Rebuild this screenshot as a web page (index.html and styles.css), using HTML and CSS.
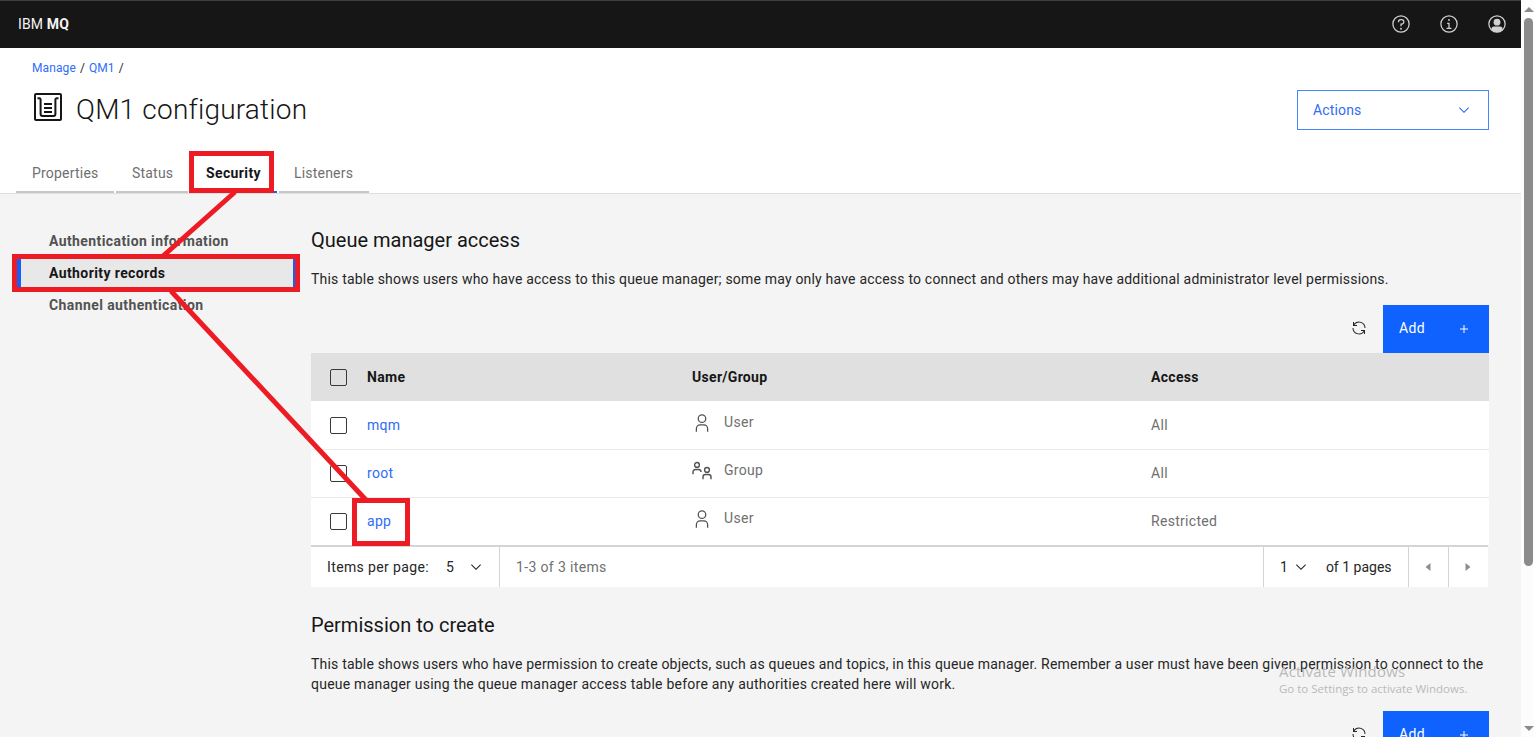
FILE: index.html
```html
<!DOCTYPE html>
<html lang="en">
<head>
  <meta charset="UTF-8">
  <meta name="viewport" content="width=device-width, initial-scale=1.0">
  <title>IBM MQ</title>
  <link rel="stylesheet" href="styles.css">
</head>
<body>
  <!-- Shared icons -->
  <svg class="icon-defs" width="0" height="0">
    <symbol id="icon-user" viewBox="0 0 32 32">
      <path d="M16,4a5,5,0,1,1-5,5,5,5,0,0,1,5-5m0-2a7,7,0,1,0,7,7A7,7,0,0,0,16,2Z"/>
      <path d="M26,30H24V25a5,5,0,0,0-5-5H13a5,5,0,0,0-5,5v5H6V25a7,7,0,0,1,7-7h6a7,7,0,0,1,7,7Z"/>
    </symbol>
    <symbol id="icon-group" viewBox="0 0 20 20">
      <g fill="none" stroke="currentColor" stroke-width="1.4">
        <circle cx="5" cy="3.9" r="2.4"/>
        <path d="M1,13.2V10.9A2.4,2.4,0,0,1,3.4,8.5H6.6A2.4,2.4,0,0,1,9,10.9"/>
        <circle cx="15" cy="8.9" r="2.4"/>
        <path d="M11,18.2V15.9A2.4,2.4,0,0,1,13.4,13.5H16.6A2.4,2.4,0,0,1,19,15.9V18.2"/>
      </g>
    </symbol>
    <symbol id="icon-renew" viewBox="0 0 32 32">
      <path d="M12,10H6.78A11,11,0,0,1,27,16h2A13,13,0,0,0,6,7.68V4H4v8h8Z"/>
      <path d="M20,22h5.22A11,11,0,0,1,5,16H3a13,13,0,0,0,23,8.32V28h2V20H20Z"/>
    </symbol>
    <symbol id="icon-chevron" viewBox="0 0 16 16">
      <path d="M8 11 3 6 3.7 5.3 8 9.6 12.3 5.3 13 6z"/>
    </symbol>
    <symbol id="icon-add" viewBox="0 0 32 32">
      <path d="M17 15 17 8 15 8 15 15 8 15 8 17 15 17 15 24 17 24 17 17 24 17 24 15z"/>
    </symbol>
  </svg>

  <div class="window">
    <div class="app">
      <header class="topbar">
        <div class="brand">IBM <b>MQ</b></div>
        <div class="topbar-icons">
          <svg viewBox="0 0 32 32">
            <path d="M16,2A14,14,0,1,0,30,16,14,14,0,0,0,16,2Zm0,26A12,12,0,1,1,28,16,12,12,0,0,1,16,28Z"/>
            <circle cx="16" cy="23.5" r="1.5"/>
            <path d="M17,8H15.5A4.49,4.49,0,0,0,11,12.5V13h2v-.5A2.5,2.5,0,0,1,15.5,10H17a2.5,2.5,0,0,1,0,5H15v4.5h2V17a4.5,4.5,0,0,0,0-9Z"/>
          </svg>
          <svg viewBox="0 0 32 32">
            <path d="M17 22 17 14 13 14 13 16 15 16 15 22 12 22 12 24 20 24 20 22 17 22z"/>
            <path d="M16,8a1.5,1.5,0,1,0,1.5,1.5A1.5,1.5,0,0,0,16,8Z"/>
            <path d="M16,30A14,14,0,1,1,30,16,14,14,0,0,1,16,30ZM16,4A12,12,0,1,0,28,16,12,12,0,0,0,16,4Z"/>
          </svg>
          <svg viewBox="0 0 32 32">
            <circle cx="16" cy="16" r="13" fill="none" stroke="currentColor" stroke-width="2"/>
            <circle cx="16" cy="13" r="5.5"/>
            <path d="M7,25.5V24a4,4,0,0,1,4-4H21a4,4,0,0,1,4,4v1.5A13,13,0,0,1,7,25.5Z"/>
          </svg>
        </div>
      </header>

      <section class="page-header">
        <nav class="breadcrumb">
          <a>Manage</a><span>/</span><a>QM1</a><span>/</span>
        </nav>
        <div class="title-row">
          <svg class="title-icon" viewBox="0 0 32 32">
            <g fill="none" stroke="currentColor" stroke-width="2">
              <rect x="3" y="3" width="26" height="26" rx="1"/>
              <path d="M5.5,7.2H7.2A1.4,1.4,0,0,1,8.6,8.6V23A2,2,0,0,0,10.6,25H21.4A2,2,0,0,0,23.4,23V8.6A1.4,1.4,0,0,1,24.8,7.2H26.5"/>
              <path d="M12,13H20M12,17H20M12,21H20"/>
            </g>
          </svg>
          <h1>QM1 configuration</h1>
          <button class="actions">Actions <svg><use href="#icon-chevron"/></svg></button>
        </div>
        <div class="tabs">
          <div class="tab tab-properties">Properties</div>
          <div class="tab tab-status">Status</div>
          <div class="tab tab-security selected">Security</div>
          <div class="tab tab-listeners">Listeners</div>
        </div>
      </section>

      <div class="main">
        <aside class="sidenav">
          <div class="sidenav-item">Authentication information</div>
          <div class="sidenav-item selected">Authority records</div>
          <div class="sidenav-item">Channel authentication</div>
        </aside>

        <main class="content">
          <h2>Queue manager access</h2>
          <p>This table shows users who have access to this queue manager; some may only have access to connect and others may have additional administrator level permissions.</p>
          <div class="toolbar">
            <svg class="renew"><use href="#icon-renew"/></svg>
            <button class="add">Add <svg><use href="#icon-add"/></svg></button>
          </div>
          <div class="table">
            <div class="row head">
              <i class="checkbox"></i><span>Name</span><span>User/Group</span><span>Access</span>
            </div>
            <div class="row">
              <i class="checkbox"></i><a>mqm</a><span class="kind"><svg><use href="#icon-user"/></svg>User</span><span>All</span>
            </div>
            <div class="row">
              <i class="checkbox"></i><a>root</a><span class="kind"><svg><use href="#icon-group"/></svg>Group</span><span>All</span>
            </div>
            <div class="row">
              <i class="checkbox"></i><a>app</a><span class="kind"><svg><use href="#icon-user"/></svg>User</span><span>Restricted</span>
            </div>
          </div>
          <div class="pagination">
            <div class="per-page"><span class="per-page-label">Items per page:</span><span class="per-page-value">5</span><svg><use href="#icon-chevron"/></svg></div>
            <div class="range">1-3 of 3 items</div>
            <div class="page-select"><span>1</span><svg><use href="#icon-chevron"/></svg><span>of 1 pages</span></div>
            <div class="page-btn"><svg viewBox="0 0 16 16"><path d="M10.5 4 5.5 8 10.5 12z"/></svg></div>
            <div class="page-btn"><svg viewBox="0 0 16 16"><path d="M5.5 4 10.5 8 5.5 12z"/></svg></div>
          </div>

          <h2 class="create-title">Permission to create</h2>
          <p>This table shows users who have permission to create objects, such as queues and topics, in this queue manager. Remember a user must have been given permission to connect to the<br><span class="create-rest">queue manager using the queue manager access table before any authorities created here will work.</span></p>
          <div class="toolbar create-toolbar">
            <svg class="renew"><use href="#icon-renew"/></svg>
            <button class="add">Add <svg><use href="#icon-add"/></svg></button>
          </div>
        </main>
      </div>
    </div>

    <div class="scrollbar">
      <i class="arrow-up"></i>
      <i class="thumb"></i>
      <i class="arrow-down"></i>
    </div>
  </div>

  <!-- Path through Security > Authority records > app -->
  <svg class="annotations" viewBox="0 0 1534 737">
    <rect x="191.5" y="153.5" width="80" height="37"/>
    <rect x="14.5" y="256.5" width="283" height="33"/>
    <rect x="354.5" y="500.5" width="53" height="43"/>
    <path d="M235,192 163,256"/>
    <path d="M171,291 366,500"/>
  </svg>

  <div class="watermark">
    <div class="watermark-title">Activate Windows</div>
    <div class="watermark-text">Go to Settings to activate Windows.</div>
  </div>
</body>
</html>
```
FILE: styles.css
```css
* {
  margin: 0;
  padding: 0;
  box-sizing: border-box;
}
body {
  font-family: Roboto, "Liberation Sans", sans-serif;
  font-size: 14px;
  line-height: 20px;
  color: #262626;
  background: #f4f4f4;
  overflow: hidden;
}
svg {
  fill: currentColor;
  display: block;
  flex: none;
}
button {
  font: inherit;
  border: none;
}
a {
  color: #2f6df6;
}
.icon-defs {
  position: absolute;
}
.window {
  display: flex;
  width: 1534px;
  height: 737px;
}
.app {
  width: 1521px;
  height: 737px;
  overflow: hidden;
}

/* Top bar */
.topbar {
  height: 48px;
  padding: 0 14px 1px 18px;
  border-top: 1px solid #3f3f3f;
  background: #161616;
  color: #f4f4f4;
  display: flex;
  justify-content: space-between;
  align-items: center;
}
.brand {
  letter-spacing: 0.15px;
  margin-top: -1px;
}
.brand b {
  font-weight: 700;
}
.topbar-icons {
  display: flex;
  gap: 28px;
  color: #d0d0d0;
}
.topbar-icons svg {
  width: 20px;
  height: 20px;
}

/* Page header */
.page-header {
  height: 146px;
  background: #fff;
  border-bottom: 1px solid #e0e0e0;
  padding-top: 10px;
}
.breadcrumb {
  display: flex;
  padding-left: 32px;
  font-size: 12px;
  letter-spacing: 0.1px;
  height: 20px;
}
.breadcrumb span {
  margin: 0 4px;
}
.title-row {
  display: flex;
  align-items: center;
  height: 40px;
  margin-top: 12px;
  padding: 0 32px;
}
.title-icon {
  width: 32px;
  height: 32px;
  color: #161616;
  margin-top: -6px;
}
h1 {
  font-size: 28px;
  line-height: 36px;
  font-weight: 300;
  letter-spacing: 0.2px;
  color: #161616;
  margin-left: 12px;
}
.actions {
  margin-left: auto;
  width: 192px;
  height: 40px;
  padding: 0 16px 0 15px;
  border: 1px solid #4387ff;
  background: #fff;
  color: #2f6df6;
  letter-spacing: 0.15px;
  display: flex;
  justify-content: space-between;
  align-items: center;
}
.actions svg {
  width: 16px;
  height: 16px;
}
.tabs {
  display: flex;
  gap: 2px;
  padding-left: 16px;
  margin-top: 23px;
}
.tab {
  height: 40px;
  line-height: 41px;
  padding-left: 16px;
  border-bottom: 2px solid #c6c6c6;
  color: #6f6f6f;
  letter-spacing: 0.2px;
  white-space: nowrap;
}
.tab.selected {
  border-color: #0f62fe;
  color: #161616;
  font-weight: 700;
  letter-spacing: 0.38px;
}
.tab-properties { width: 98px; }
.tab-status { width: 72px; }
.tab-security { width: 87px; }
.tab-listeners { width: 90px; padding-left: 15px; }

/* Body */
.main {
  display: flex;
}
.sidenav {
  width: 280px;
  margin: 31px 15px 0 16px;
  flex: none;
}
.sidenav-item {
  height: 32px;
  line-height: 32px;
  padding-left: 33px;
  font-weight: 700;
  letter-spacing: 0.4px;
  color: #525252;
}
.sidenav-item.selected {
  background: #e8e8e8;
  border-left: 5px solid #0f62fe;
  border-right: 3px solid #0f62fe;
  padding-left: 28px;
  color: #161616;
}
.content {
  width: 1178px;
  padding-top: 33px;
  flex: none;
}
h2 {
  font-size: 20px;
  line-height: 26px;
  font-weight: 400;
  color: #161616;
}
.content p {
  margin-top: 16px;
  letter-spacing: 0.195px;
  white-space: nowrap;
}
.create-rest {
  letter-spacing: 0.235px;
}
.toolbar {
  display: flex;
  justify-content: flex-end;
  align-items: center;
  height: 48px;
  margin-top: 16px;
}
.create-toolbar {
  margin-top: 17px;
}
.renew {
  width: 16px;
  height: 16px;
  margin: -3px 16px 0 0;
}
.add {
  width: 106px;
  height: 48px;
  padding: 0 17px 2px 16px;
  background: #0f62fe;
  color: #fff;
  letter-spacing: 0.35px;
  display: flex;
  justify-content: space-between;
  align-items: center;
}
.add svg {
  width: 16px;
  height: 16px;
  margin-top: 2px;
}
.row {
  display: grid;
  grid-template-columns: 56px 325px 459px 1fr;
  align-items: center;
  height: 48px;
  padding-bottom: 1px;
  background: #fff;
  color: #6f6f6f;
  letter-spacing: 0.3px;
  border-top: 1px solid #e8e8e8;
}
.row.head {
  background: #e0e0e0;
  border-color: #e0e0e0;
  color: #161616;
  font-weight: 700;
}
.row.head + .row {
  border-color: #fff;
}
.checkbox {
  width: 17px;
  height: 17px;
  margin-left: 19px;
  border: 1px solid #393939;
  border-radius: 2px;
}
.kind {
  display: flex;
  align-items: center;
  gap: 12px;
  margin-top: -6px;
}
.kind svg {
  width: 20px;
  height: 20px;
  margin-top: 2px;
  color: #525252;
}
.pagination {
  display: flex;
  width: 1177px;
  height: 42px;
  border-top: 2px solid #d4d4d4;
  background: #fff;
  line-height: 40px;
}
.pagination svg {
  width: 16px;
  height: 16px;
}
.per-page {
  display: flex;
  align-items: center;
  width: 188px;
  padding-left: 16px;
}
.per-page-label {
  width: 119px;
  letter-spacing: 0.38px;
}
.per-page-value {
  width: 22px;
}
.range {
  flex: 1;
  padding-left: 16px;
  border-left: 1px solid #d4d4d4;
  color: #6f6f6f;
  letter-spacing: 0.36px;
}
.page-select {
  display: flex;
  align-items: center;
  width: 145px;
  padding-left: 16px;
  border-left: 1px solid #d4d4d4;
}
.page-select svg {
  margin: 0 17px 0 5px;
}
.page-btn {
  display: flex;
  align-items: center;
  justify-content: center;
  width: 40px;
  padding-right: 2px;
  border-left: 1px solid #d4d4d4;
  color: #8d8d8d;
}
.create-title {
  margin-top: 25px;
}

/* Scrollbar */
.scrollbar {
  width: 13px;
  padding-left: 3px;
  background: #fcfcfc;
  display: flex;
  flex-direction: column;
}
.arrow-up, .arrow-down {
  width: 0;
  border-left: 5px solid transparent;
  border-right: 5px solid transparent;
}
.arrow-up {
  margin-top: 7px;
  border-bottom: 5px solid #8b8b8b;
}
.arrow-down {
  margin: auto 0 6px;
  border-top: 5px solid #8b8b8b;
}
.thumb {
  width: 9px;
  height: 548px;
  margin-top: 6px;
  border-radius: 5px;
  background: #8b8b8b;
}

/* Overlays */
.annotations {
  position: absolute;
  left: 0;
  top: 0;
  width: 1534px;
  height: 737px;
  fill: none;
  stroke: #ed1c24;
  stroke-width: 5;
}
.watermark {
  position: absolute;
  left: 1279px;
  top: 661px;
  font-family: "Open Sans", sans-serif;
  color: #b9b9b9;
  white-space: nowrap;
}
.watermark-title {
  font-size: 15px;
  letter-spacing: 0.2px;
}
.watermark-text {
  font-size: 11.5px;
  line-height: 16px;
}
```
